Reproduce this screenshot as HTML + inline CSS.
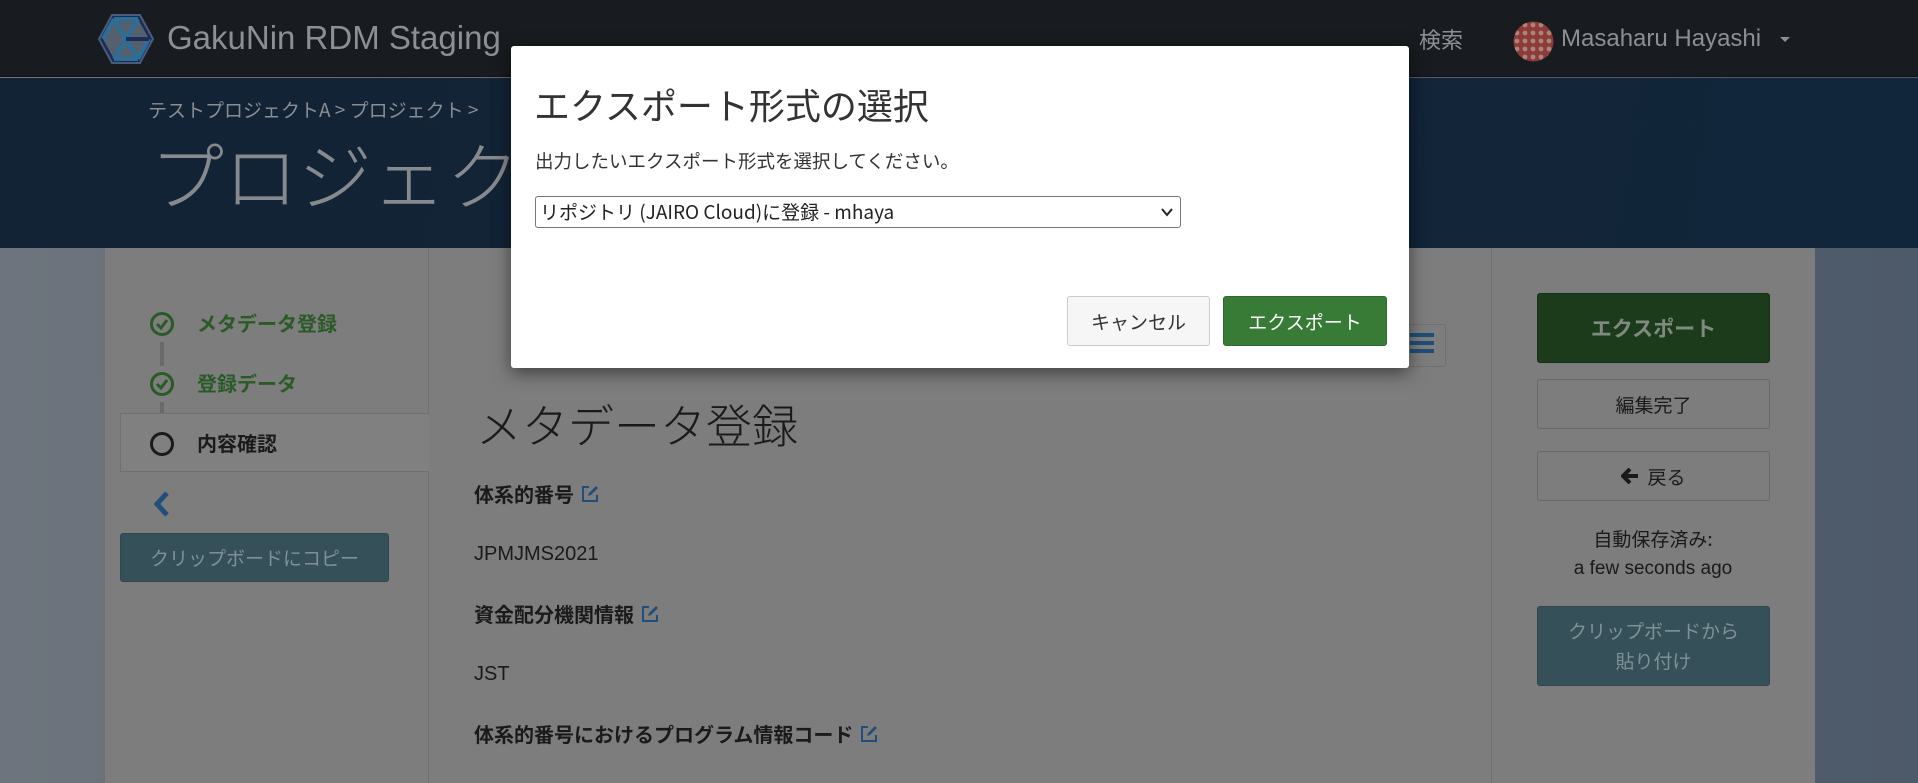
<!DOCTYPE html>
<html><head><meta charset="utf-8"><style>
*{margin:0;padding:0;box-sizing:border-box}
body{width:1918px;height:783px;overflow:hidden;position:relative;font-family:"Liberation Sans","Noto Sans CJK JP",sans-serif;background:linear-gradient(90deg,#6d747d 0%,#5f6772 50%,#4d5a6a 100%)}
.a{position:absolute;white-space:nowrap}
.jp{font-family:"Noto Sans CJK JP",sans-serif}
.btn{position:absolute;display:flex;align-items:center;justify-content:center;border-radius:3px;font-family:"Noto Sans CJK JP",sans-serif}
.ed{display:inline-block;vertical-align:-2px;margin-left:6px}
</style></head><body>
<div class="a" style="left:0;top:0;width:1918px;height:77px;background:#181b1f;border-bottom:1px solid #101316"></div>
<svg class="a" style="left:98px;top:13px" width="56" height="52" viewBox="0 0 56 52">
<polygon points="14,2 42,2 55,26 42,50 14,50 1,26" fill="#1d2c55" stroke="#4b5c7a" stroke-width="2"/>
<polygon points="16,6 40,6 51,26 40,46 16,46 5,26" fill="#55606e"/>
<path d="M16,6 L40,46 M40,6 L16,46 M16,6 L40,6 M5,26 L16,6 M51,26 L40,46 M16,46 L40,46" stroke="#2a6f9a" stroke-width="4" fill="none"/>
<path d="M28,26 L51,26" stroke="#1d2c55" stroke-width="4"/>
</svg>
<div class="a" style="left:167px;top:16px;font-size:33px;color:#8c8f93;line-height:44px">GakuNin RDM Staging</div>
<div class="a jp" style="left:1419px;top:24px;font-size:22px;color:#8c8f93;line-height:30px">検索</div>
<svg class="a" style="left:1513px;top:21px" width="41" height="41"><defs><pattern id="p" width="8" height="8" patternUnits="userSpaceOnUse"><rect width="8" height="8" fill="#8e3a36"/><circle cx="4" cy="4" r="2.4" fill="#a88580"/></pattern></defs><circle cx="20.5" cy="20.5" r="20" fill="url(#p)"/></svg>
<div class="a" style="left:1561px;top:22px;font-size:24px;color:#8c8f93;line-height:34px">Masaharu Hayashi</div>
<div class="a" style="left:1780px;top:37px;width:0;height:0;border-left:5px solid transparent;border-right:5px solid transparent;border-top:5px solid #8c8f93"></div>
<div class="a" style="left:0;top:78px;width:1918px;height:170px;background:linear-gradient(100deg,#122335 0%,#122438 60%,#11263a 100%)"></div>
<div class="a jp" style="left:148px;top:96px;font-size:19px;color:#8a8d91;line-height:28px">テストプロジェクトA &gt; プロジェクト &gt;</div>
<div class="a jp" style="left:150px;top:128px;font-size:74px;color:#878a8d;line-height:90px;font-weight:300">プロジェクト</div>
<div class="a" style="left:105px;top:248px;width:1710px;height:535px;background:#7d7d7d"></div>
<div class="a" style="left:428px;top:248px;width:1px;height:535px;background:#727272"></div>
<div class="a" style="left:1491px;top:248px;width:1px;height:535px;background:#727272"></div>
<svg class="a" style="left:149px;top:311px" width="26" height="26"><circle cx="13" cy="13" r="10.5" fill="none" stroke="#2a5a26" stroke-width="3"/><path d="M8,13 L12,17 L18,9" fill="none" stroke="#2a5a26" stroke-width="3"/></svg>
<div class="a jp" style="left:197px;top:308px;font-size:20px;font-weight:700;color:#2a5a26;line-height:30px">メタデータ登録</div>
<div class="a" style="left:160px;top:342px;width:4px;height:24px;background:#6a6a6a"></div>
<svg class="a" style="left:149px;top:371px" width="26" height="26"><circle cx="13" cy="13" r="10.5" fill="none" stroke="#2a5a26" stroke-width="3"/><path d="M8,13 L12,17 L18,9" fill="none" stroke="#2a5a26" stroke-width="3"/></svg>
<div class="a jp" style="left:197px;top:368px;font-size:20px;font-weight:700;color:#2a5a26;line-height:30px">登録データ</div>
<div class="a" style="left:160px;top:402px;width:4px;height:12px;background:#6a6a6a"></div>
<div class="a" style="left:120px;top:413px;width:309px;height:59px;background:#808080;border:1px solid #707070;border-right:none"></div>
<svg class="a" style="left:149px;top:431px" width="26" height="26"><circle cx="13" cy="13" r="10.5" fill="none" stroke="#1a1a1a" stroke-width="3"/></svg>
<div class="a jp" style="left:197px;top:428px;font-size:20px;font-weight:700;color:#1a1a1a;line-height:30px">内容確認</div>
<svg class="a" style="left:152px;top:490px" width="20" height="28"><path d="M15,3 L5,14 L15,25" fill="none" stroke="#1f4f7a" stroke-width="5"/></svg>
<div class="btn" style="left:120px;top:533px;width:269px;height:49px;background:#36505a;border:1px solid #2f464c;color:#7f9196;font-size:19px">クリップボードにコピー</div>
<div class="a" style="left:1400px;top:324px;width:46px;height:43px;border:1px solid #707070;border-radius:3px"></div>
<div class="a" style="left:1410px;top:333px;width:24px;height:4px;background:#1f4f7a;box-shadow:0 8px 0 #1f4f7a,0 16px 0 #1f4f7a"></div>
<div class="a jp" style="left:476px;top:392px;font-size:46px;color:#1a1a1a;line-height:64px;font-weight:300">メタデータ登録</div>
<svg width="0" height="0" style="position:absolute"><defs><symbol id="ed" viewBox="0 0 20 20"><path d="M9,3 H3 V17 H17 V11" fill="none" stroke="#1f4f7a" stroke-width="2"/><path d="M8,12 L9,9 L16,2 L18,4 L11,11Z" fill="#1f4f7a"/></symbol></defs></svg>
<div class="a jp" style="left:474px;top:479px;font-size:20px;font-weight:700;color:#1a1a1a;line-height:30px">体系的番号<svg class="ed" width="20" height="20"><use href="#ed"/></svg></div>
<div class="a" style="left:474px;top:540px;font-size:20px;color:#1a1a1a;line-height:28px">JPMJMS2021</div>
<div class="a jp" style="left:474px;top:599px;font-size:20px;font-weight:700;color:#1a1a1a;line-height:30px">資金配分機関情報<svg class="ed" width="20" height="20"><use href="#ed"/></svg></div>
<div class="a" style="left:474px;top:660px;font-size:20px;color:#1a1a1a;line-height:28px">JST</div>
<div class="a jp" style="left:474px;top:719px;font-size:20px;font-weight:700;color:#1a1a1a;line-height:30px">体系的番号におけるプログラム情報コード<svg class="ed" width="20" height="20"><use href="#ed"/></svg></div>
<div class="btn" style="left:1537px;top:293px;width:233px;height:70px;background:#1c3b1b;border:1px solid #163015;color:#808a80;font-size:21px;font-weight:700">エクスポート</div>
<div class="btn" style="left:1537px;top:379px;width:233px;height:50px;background:#7d7d7d;border:1px solid #686868;color:#1a1a1a;font-size:19px">編集完了</div>
<div class="btn" style="left:1537px;top:451px;width:233px;height:50px;background:#7d7d7d;border:1px solid #686868;color:#1a1a1a;font-size:19px"><svg width="18" height="16" style="margin-right:8px"><path d="M9,1 L2,8 L9,15 M2,8 H17" fill="none" stroke="#1a1a1a" stroke-width="4"/></svg>戻る</div>
<div class="a jp" style="left:1491px;width:324px;top:524px;text-align:center;font-size:19px;color:#1a1a1a;line-height:30px">自動保存済み:</div>
<div class="a" style="left:1491px;width:324px;top:554px;text-align:center;font-size:19px;color:#1a1a1a;line-height:30px">a few seconds ago</div>
<div class="btn" style="left:1537px;top:606px;width:233px;height:80px;background:#36505a;border:1px solid #2f464c;color:#7f9196;font-size:19px;line-height:30px;text-align:center">クリップボードから<br>貼り付け</div>
<div class="a" style="left:511px;top:46px;width:898px;height:322px;background:#fff;border-radius:3px;box-shadow:0 5px 18px rgba(0,0,0,.5)"></div>
<div class="a jp" style="left:534px;top:80px;font-size:36px;color:#333;line-height:48px">エクスポート形式の選択</div>
<div class="a jp" style="left:535px;top:147px;font-size:18.5px;color:#333;line-height:28px">出力したいエクスポート形式を選択してください。</div>
<div class="a" style="left:535px;top:196px;width:646px;height:32px;border:1px solid #767676;border-radius:3px;background:#fff"></div>
<div class="a jp" style="left:540px;top:197px;font-size:19px;color:#222;line-height:30px">リポジトリ (JAIRO Cloud)に登録 - mhaya</div>
<svg class="a" style="left:1160px;top:206px" width="14" height="12"><path d="M2,3 L7,9 L12,3" fill="none" stroke="#222" stroke-width="2"/></svg>
<div class="btn" style="left:1067px;top:296px;width:143px;height:50px;background:#f6f6f6;border:1px solid #ccc;color:#333;font-size:19px">キャンセル</div>
<div class="btn" style="left:1223px;top:296px;width:164px;height:50px;background:#377b37;border:1px solid #2e6a2e;color:#fff;font-size:19px">エクスポート</div>
</body></html>
